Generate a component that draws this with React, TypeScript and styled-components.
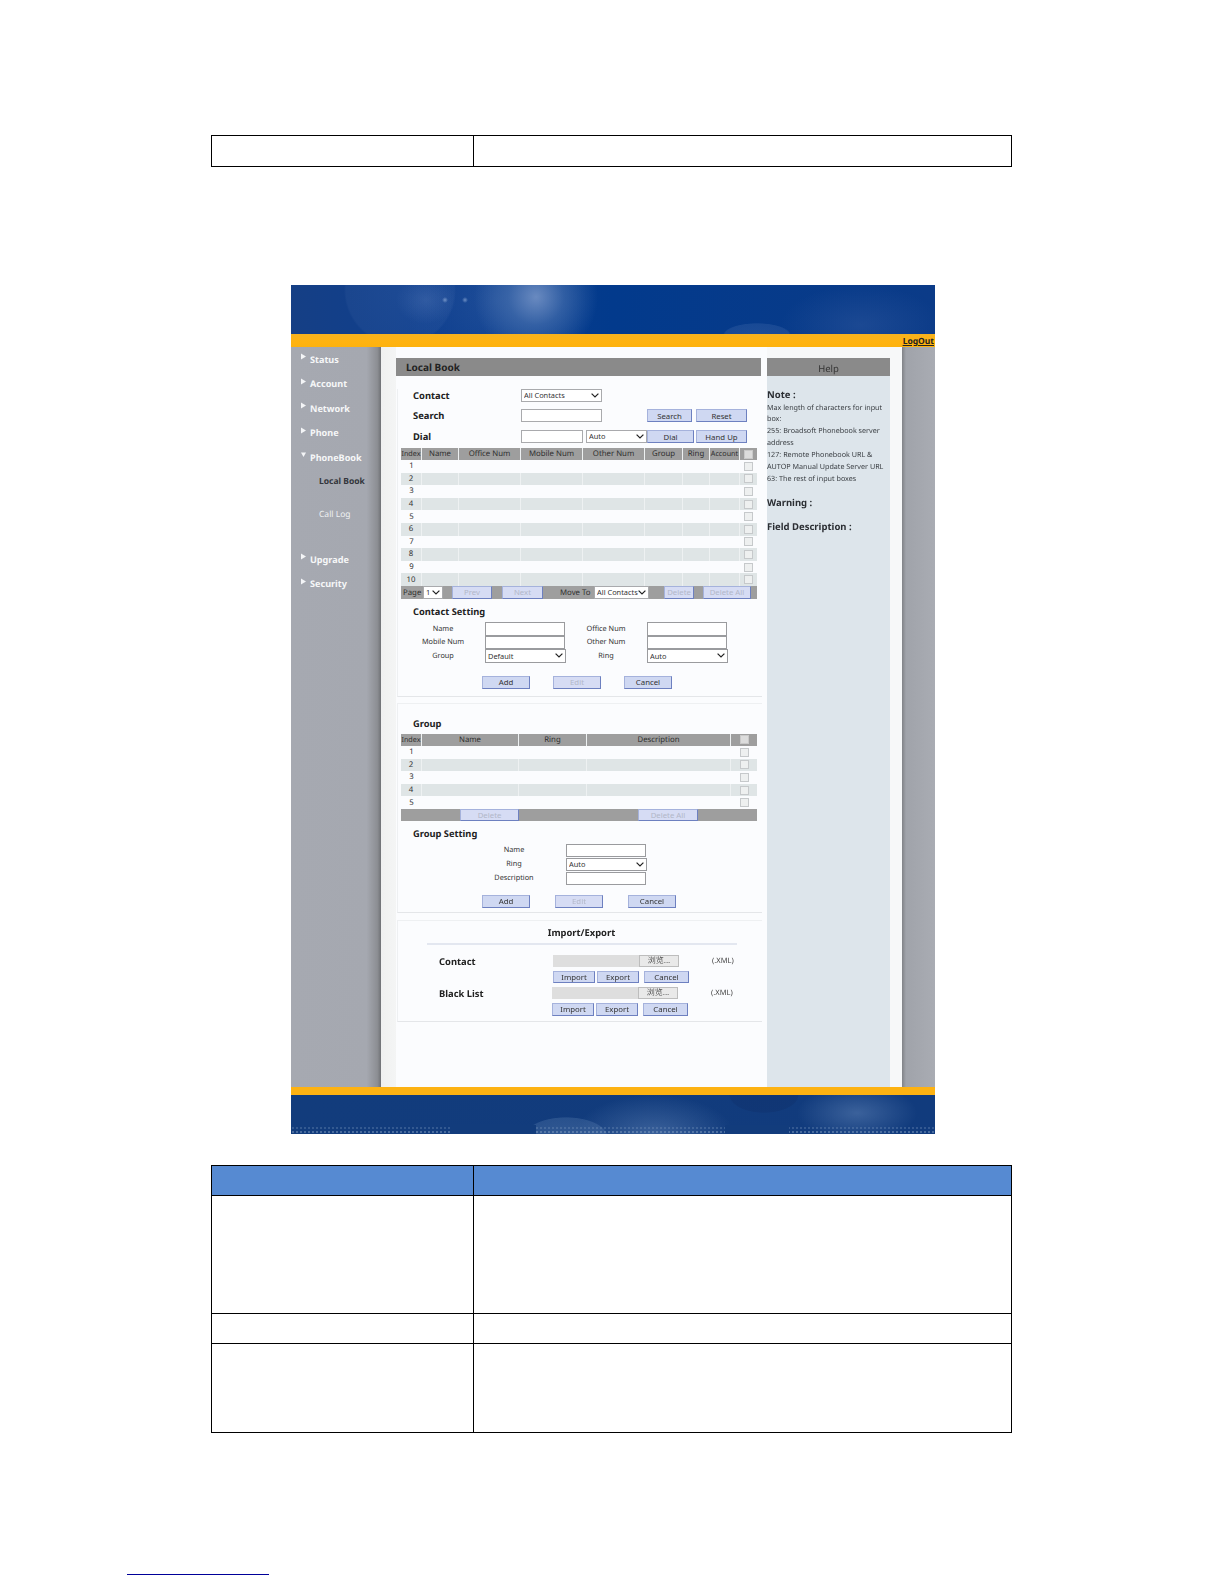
import React from "react";
import styled, { createGlobalStyle, css } from "styled-components";

const Global = createGlobalStyle`
  html, body { margin: 0; padding: 0; background: #fff; }
  body { font-family: "Noto Sans", "Liberation Sans", sans-serif; }
  * { box-sizing: border-box; }
`;

const chevron = css`
  appearance: none;
  background-color: #fff;
  background-image: url("data:image/svg+xml,%3Csvg xmlns='http://www.w3.org/2000/svg' width='8' height='5' viewBox='0 0 8 5'%3E%3Cpath d='M.6.6L4 4l3.4-3.4' fill='none' stroke='%23222' stroke-width='1.2'/%3E%3C/svg%3E");
  background-repeat: no-repeat;
  background-position: right 2px center;
  border-radius: 0;
  font-family: "Noto Sans", "Liberation Sans", sans-serif;
  color: #333;
`;

const Page = styled.div`
  width: 1224px;
  height: 1584px;
  padding-top: 135px;
  overflow: hidden;
`;

const DocTable = styled.div<{ $rows: string; $top: number }>`
  display: grid;
  grid-template-columns: 262px 1fr;
  grid-template-rows: ${(p) => p.$rows};
  width: 801px;
  margin: ${(p) => p.$top}px 0 0 211px;
  border-top: 1px solid #000;
  border-left: 1px solid #000;
`;

const DocCell = styled.div<{ $head?: boolean }>`
  border-right: 1px solid #000;
  border-bottom: 1px solid #000;
  background: ${(p) => (p.$head ? "#568ad2" : "#fff")};
`;

const Frame = styled.div`
  width: 644px;
  height: 849px;
  margin: 118px 0 0 291px;
  display: flex;
  flex-direction: column;
  filter: blur(0.35px);
  color: #333;
  font-size: 8px;
  text-rendering: geometricPrecision;
`;

const Header = styled.div`
  height: 49px;
  flex: none;
  background:
    radial-gradient(circle at 154px 15px, rgba(190, 210, 240, 0.5) 0, rgba(190, 210, 240, 0) 3px),
    radial-gradient(circle at 174px 15px, rgba(190, 210, 240, 0.5) 0, rgba(190, 210, 240, 0) 3px),
    radial-gradient(circle at 245px 12px, rgba(120, 150, 200, 0.85) 0, rgba(80, 120, 180, 0.55) 28px, rgba(30, 75, 150, 0) 62px),
    radial-gradient(circle at 109px 5px, rgba(120, 150, 200, 0.12) 0, rgba(120, 150, 200, 0.08) 54px, rgba(20, 60, 130, 0) 56px),
    radial-gradient(ellipse 30px 24px at 135px 15px, rgba(120, 150, 205, 0.22) 0, rgba(120, 150, 205, 0) 100%),
    radial-gradient(circle at 205px 15px, rgba(110, 140, 195, 0.2) 0, rgba(60, 100, 170, 0.1) 60px, rgba(20, 60, 130, 0) 90px),
    radial-gradient(ellipse 34px 12px at 466px 50px, rgba(90, 125, 185, 0.28) 0, rgba(90, 125, 185, 0.22) 94%, rgba(0, 0, 0, 0) 100%),
    radial-gradient(ellipse 80px 40px at 570px 40px, rgba(70, 105, 170, 0.3) 0, rgba(0, 0, 0, 0) 100%),
    linear-gradient(90deg, #153f85 0, #0f3f8e 20%, #023a8c 50%, #0b3b88 100%);
`;

const OrangeBar = styled.div`
  height: 13px;
  flex: none;
  display: flex;
  justify-content: flex-end;
  align-items: flex-end;
  padding-right: 1px;
  background: linear-gradient(#f6b21f, #ffb310 60%, #fdb20e);
`;

const LogOut = styled.span`
  color: #222;
  font-weight: 700;
  font-size: 8.5px;
  line-height: 11px;
  text-decoration: underline;
`;

const Body = styled.div`
  flex: 1;
  min-height: 0;
  display: grid;
  grid-template-columns: 90px 521px 33px;
`;

const Sidebar = styled.nav`
  display: flex;
  flex-direction: column;
  background: linear-gradient(90deg, #a6a9b1 0, #a5a8b0 84%, #8c8e93 96%, #6f7175 100%);
`;

const NavItem = styled.div`
  height: 24.5px;
  display: flex;
  align-items: center;
  padding-left: 10px;
  gap: 4px;
  color: #f6f7f8;
  font-weight: 700;
  font-size: 9.1px;
`;

const NavIcon = styled.svg`
  width: 5px;
  height: 7px;
  margin-top: -5px;
  flex: none;
`;

const SubItem = styled.div<{ $active?: boolean; $after?: number }>`
  height: 24px;
  display: flex;
  align-items: center;
  padding-left: 28px;
  margin-bottom: ${(p) => p.$after ?? 0}px;
  color: ${(p) => (p.$active ? "#33363c" : "#eef0f2")};
  font-weight: ${(p) => (p.$active ? 700 : 400)};
  font-size: 8.5px;
`;

const Main = styled.main`
  display: grid;
  grid-template-columns: 15px 371px 123px 12px;
  background: #f7f8f9;
`;

const Strip = styled.div`
  background: linear-gradient(90deg, #eff0f0, #f4f5f5);
`;

const Column = styled.div`
  background: #fbfcfe;
  padding-top: 11px;
`;

const HelpPanel = styled.aside`
  background: #dde5eb;
  margin-top: 11px;
`;

const RightRail = styled.div`
  background: linear-gradient(90deg, #808287 0, #a0a3aa 12%, #a9acb3 100%);
`;

const HelpBar = styled.div`
  height: 18px;
  background: #8a8a8a;
  color: #333;
  font-size: 9.5px;
  line-height: 21px;
  text-align: center;
`;

const HelpHeading = styled.div<{ $top: number }>`
  margin-top: ${(p) => p.$top}px;
  font-weight: 700;
  font-size: 9.5px;
  line-height: 13px;
  color: #2b2e33;
`;

const HelpText = styled.div`
  padding-top: 1.5px;
  font-size: 7.2px;
  line-height: 11.9px;
  color: #3c4045;
  white-space: pre;
`;

const TitleBar = styled.div`
  width: 365px;
  height: 18px;
  background: #8a8a8a;
  padding-left: 10px;
  color: #222;
  font-weight: 700;
  font-size: 10px;
  line-height: 19px;
`;

const Section = styled.section<{ $top: number; $pad: number }>`
  width: 365px;
  margin: ${(p) => p.$top}px 0 0 1px;
  padding-bottom: ${(p) => p.$pad}px;
  border-bottom: 1px solid #e4e6e9;
  border-top: ${(p) => (p.$top ? "1px solid #eef0f2" : "none")};
  border-left: 1px solid #eef0f2;
`;

const ToolRow = styled.div<{ $top: number }>`
  display: flex;
  align-items: center;
  height: 13px;
  margin-top: ${(p) => p.$top}px;
  padding-left: 15px;
`;

const RowLabel = styled.span`
  width: 108px;
  flex: none;
  font-weight: 700;
  font-size: 9.4px;
  color: #222;
`;

const TextBox = styled.input<{ $w: string; $ml?: number }>`
  width: ${(p) => p.$w};
  height: 13px;
  margin: 0 0 0 ${(p) => p.$ml ?? 0}px;
  padding: 0 2px;
  background: #fff;
  border: 1px solid #a9aaad;
  flex: none;
`;

const Dropdown = styled.select<{ $w: string; $ml?: number }>`
  ${chevron}
  width: ${(p) => p.$w};
  height: 13px;
  margin: 0 0 0 ${(p) => p.$ml ?? 0}px;
  padding: 0 9px 0 2px;
  border: 1px solid #a9aaad;
  font-size: 7.4px;
  line-height: 11px;
  flex: none;
`;

const Btn = styled.button<{ $w: number; $ml?: number; $off?: boolean; $h?: number }>`
  width: ${(p) => p.$w}px;
  height: ${(p) => p.$h ?? 13}px;
  margin: 0 0 0 ${(p) => p.$ml ?? 0}px;
  padding: 0;
  flex: none;
  background: ${(p) => (p.$off ? "#d6dcf4" : "#cfd8f2")};
  border: 1px solid;
  border-color: #a5b2dc #6d80c0 #6d80c0 #a5b2dc;
  border-radius: 0;
  font-family: "Noto Sans", "Liberation Sans", sans-serif;
  font-size: 7.8px;
  line-height: 10px;
  color: ${(p) => (p.$off ? "#b2b7c8" : "#333")};
`;

const DataTable = styled.div<{ $top: number }>`
  width: 356px;
  margin: ${(p) => p.$top}px 0 0 3px;
`;

const GridRow = styled.div<{ $cols: string; $h: number; $kind: "head" | "band" | "plain" }>`
  display: grid;
  grid-template-columns: ${(p) => p.$cols};
  height: ${(p) => p.$h}px;
  background: ${(p) => (p.$kind === "head" ? "#9e9e9e" : p.$kind === "band" ? "#dfe5e6" : "transparent")};
  color: ${(p) => (p.$kind === "head" ? "#2f2f2f" : "#333")};
`;

const Cell = styled.div<{ $sep: boolean; $tight?: boolean }>`
  display: flex;
  align-items: center;
  justify-content: center;
  overflow: hidden;
  white-space: nowrap;
  font-size: ${(p) => (p.$tight ? "7.2px" : "7.8px")};
  border-right: ${(p) => (p.$sep ? "1px solid #eef1f2" : "none")};
`;

const Check = styled.input<{ $head?: boolean }>`
  appearance: none;
  width: 9px;
  height: 9px;
  margin: 0;
  border: 1px solid ${(p) => (p.$head ? "#c9c9c9" : "#c6c9cb")};
  background: ${(p) => (p.$head ? "#dcdcdc" : "#eef0f0")};
`;

const ActionBar = styled.div<{ $h: number }>`
  height: ${(p) => p.$h}px;
  display: flex;
  align-items: center;
  background: #9e9e9e;
`;

const BarText = styled.span<{ $w: number; $ml: number }>`
  width: ${(p) => p.$w}px;
  margin-left: ${(p) => p.$ml}px;
  padding-top: 2px;
  flex: none;
  font-size: 7.8px;
  color: #2f2f2f;
  background: #a0a0a0;
`;

const SubTitle = styled.div<{ $top: number }>`
  height: 14px;
  margin-top: ${(p) => p.$top}px;
  padding-left: 15px;
  font-weight: 700;
  font-size: 9.3px;
  line-height: 14px;
  color: #222;
`;

const FormGrid = styled.div<{ $cols: string; $rows: string; $left: number; $top: number; $gap?: number }>`
  display: grid;
  grid-template-columns: ${(p) => p.$cols};
  grid-template-rows: ${(p) => p.$rows};
  row-gap: ${(p) => p.$gap ?? 0}px;
  padding-left: ${(p) => p.$left}px;
  margin-top: ${(p) => p.$top}px;
  align-items: stretch;
`;

const FormLabel = styled.label`
  display: flex;
  align-items: center;
  justify-content: center;
  font-size: 7.3px;
  color: #333;
`;

const FieldBox = styled.input`
  width: 80px;
  height: 100%;
  margin: 0;
  padding: 0 2px;
  background: #fff;
  border: 1px solid #9a9b9e;
`;

const FieldSelect = styled.select`
  ${chevron}
  width: 81px;
  height: 100%;
  margin: 0;
  padding: 0 9px 0 2px;
  border: 1px solid #9a9b9e;
  font-size: 7.4px;
`;

const ButtonRow = styled.div<{ $top: number; $left: number; $gap: number }>`
  display: flex;
  margin: ${(p) => p.$top}px 0 0 ${(p) => p.$left}px;
  gap: ${(p) => p.$gap}px;
`;

const CenterTitle = styled.div`
  height: 13px;
  margin-top: 5px;
  text-align: center;
  padding-left: 3px;
  font-weight: 700;
  font-size: 9.4px;
  line-height: 13px;
  color: #222;
`;

const Divider = styled.div`
  width: 310px;
  height: 2px;
  margin: 4px 0 0 29px;
  background: #e3e7f0;
`;

const FileRow = styled.div<{ $top: number }>`
  display: flex;
  align-items: center;
  height: 12px;
  margin-top: ${(p) => p.$top}px;
  padding-left: 41px;
`;

const FileLabel = styled.span<{ $w: number }>`
  width: ${(p) => p.$w}px;
  flex: none;
  font-weight: 700;
  font-size: 9.4px;
  padding-top: 1px;
  color: #222;
`;

const FileTrack = styled.span`
  width: 86px;
  height: 12px;
  flex: none;
  background: #dedede;
`;

const Browse = styled.span`
  width: 40px;
  height: 12px;
  flex: none;
  display: flex;
  align-items: center;
  justify-content: center;
  background: #e9e9e9;
  border: 1px solid #bdbdbd;
  font-family: "Noto Sans CJK SC", "Noto Sans", sans-serif;
  font-size: 8px;
  color: #555;
`;

const XmlTag = styled.span`
  margin-left: 33px;
  font-size: 7.5px;
  color: #444;
`;

const Footer = styled.div`
  height: 47px;
  flex: none;
  border-top: 8px solid #fdb212;
  background:
    linear-gradient(#123c7c, #123c7c) 160px 100% / 85px 9px no-repeat,
    linear-gradient(#123c7c, #123c7c) 434px 100% / 64px 9px no-repeat,
    radial-gradient(circle, rgba(124, 153, 189, 0.65) 0.6px, rgba(0, 0, 0, 0) 1.1px) 0 100% / 4px 4px repeat-x,
    radial-gradient(circle, rgba(124, 153, 189, 0.4) 0.6px, rgba(0, 0, 0, 0) 1.1px) 0 calc(100% - 4px) / 4px 4px repeat-x,
    radial-gradient(ellipse 42px 20px at 275px 42px, rgba(110, 145, 190, 0.35) 0, rgba(110, 145, 190, 0.25) 96%, rgba(0, 0, 0, 0) 100%),
    radial-gradient(ellipse 80px 40px at 363px 40px, rgba(100, 135, 185, 0.5) 0, rgba(0, 0, 0, 0) 100%),
    radial-gradient(ellipse 60px 28px at 566px 18px, rgba(100, 135, 185, 0.5) 0, rgba(0, 0, 0, 0) 100%),
    radial-gradient(ellipse 35px 18px at 473px 0, rgba(15, 50, 110, 0.55) 0, rgba(15, 50, 110, 0.5) 96%, rgba(0, 0, 0, 0) 100%),
    linear-gradient(90deg, #123c7c 0, #113b7d 100%);
`;

const Underline = styled.div`
  width: 142px;
  height: 1px;
  margin: 141px 0 0 127px;
  background: #000099;
`;

const contactCols = "21px 37px 62px 62px 62px 38px 27px 30px 17px";
const contactHead = ["Index", "Name", "Office Num", "Mobile Num", "Other Num", "Group", "Ring", "Account"];
const groupCols = "21px 97px 68px 144px 26px";
const groupHead = ["Index", "Name", "Ring", "Description"];

const Tri = ({ down }: { down?: boolean }) => (
  <NavIcon viewBox="0 0 5 7">
    <path d={down ? "M0 1.5h5L2.5 6z" : "M0 .5l5 3-5 3z"} fill="#f4f5f7" />
  </NavIcon>
);

const Nav = ({ label, down }: { label: string; down?: boolean }) => (
  <NavItem>
    <Tri down={down} />
    {label}
  </NavItem>
);

const Table = ({ cols, head, count, rowH }: { cols: string; head: string[]; count: number; rowH: number }) => (
  <>
    <GridRow $cols={cols} $h={12} $kind="head">
      {head.map((h) => (
        <Cell key={h} $sep $tight={h === "Index" || h === "Account"}>
          {h}
        </Cell>
      ))}
      <Cell $sep={false}>
        <Check type="checkbox" disabled $head />
      </Cell>
    </GridRow>
    {Array.from({ length: count }, (_, i) => (
      <GridRow key={i} $cols={cols} $h={rowH} $kind={i % 2 ? "band" : "plain"}>
        <Cell $sep={!!(i % 2)}>{i + 1}</Cell>
        {head.slice(1).map((h) => (
          <Cell key={h} $sep={!!(i % 2)} />
        ))}
        <Cell $sep={false}>
          <Check type="checkbox" disabled />
        </Cell>
      </GridRow>
    ))}
  </>
);

const FileBlock = ({ label, labelW, top }: { label: string; labelW: number; top: number }) => (
  <FileRow $top={top}>
    <FileLabel $w={labelW}>{label}</FileLabel>
    <FileTrack />
    <Browse>浏览...</Browse>
    <XmlTag>(.XML)</XmlTag>
  </FileRow>
);

export default function App() {
  return (
    <Page>
      <Global />
      <DocTable $rows="31px" $top={0}>
        <DocCell />
        <DocCell />
      </DocTable>

      <Frame>
        <Header />
        <OrangeBar>
          <LogOut>LogOut</LogOut>
        </OrangeBar>
        <Body>
          <Sidebar>
            <Nav label="Status" />
            <Nav label="Account" />
            <Nav label="Network" />
            <Nav label="Phone" />
            <Nav label="PhoneBook" down />
            <SubItem $active $after={9}>
              Local Book
            </SubItem>
            <SubItem $after={20.5}>Call Log</SubItem>
            <Nav label="Upgrade" />
            <Nav label="Security" />
          </Sidebar>
          <Main>
            <Strip />
            <Column>
              <TitleBar>Local Book</TitleBar>
              <Section $top={0} $pad={7}>
                <ToolRow $top={13}>
                  <RowLabel>Contact</RowLabel>
                  <Dropdown $w="81px">
                    <option>All Contacts</option>
                  </Dropdown>
                </ToolRow>
                <ToolRow $top={7}>
                  <RowLabel>Search</RowLabel>
                  <TextBox $w="81px" />
                  <Btn $w={45} $ml={45}>
                    Search
                  </Btn>
                  <Btn $w={51} $ml={4}>
                    Reset
                  </Btn>
                </ToolRow>
                <ToolRow $top={8}>
                  <RowLabel>Dial</RowLabel>
                  <TextBox $w="62px" />
                  <Dropdown $w="61px" $ml={3}>
                    <option>Auto</option>
                  </Dropdown>
                  <Btn $w={47}>Dial</Btn>
                  <Btn $w={51} $ml={2}>
                    Hand Up
                  </Btn>
                </ToolRow>
                <DataTable $top={5}>
                  <Table cols={contactCols} head={contactHead} count={10} rowH={12.6} />
                  <ActionBar $h={13}>
                    <BarText $w={20} $ml={0}>
                      &nbsp;Page
                    </BarText>
                    <Dropdown $w="20px" $ml={2}>
                      <option>1</option>
                    </Dropdown>
                    <Btn $w={40} $ml={9} $off>
                      Prev
                    </Btn>
                    <Btn $w={41} $ml={10} $off>
                      Next
                    </Btn>
                    <BarText $w={34} $ml={17}>
                      Move To
                    </BarText>
                    <Dropdown $w="55px" $ml={0}>
                      <option>All Contacts</option>
                    </Dropdown>
                    <Btn $w={30} $ml={15} $off>
                      Delete
                    </Btn>
                    <Btn $w={48} $ml={9} $off>
                      Delete All
                    </Btn>
                  </ActionBar>
                </DataTable>
                <SubTitle $top={6}>Contact Setting</SubTitle>
                <FormGrid $cols="84px 80px 82px 80px" $rows="14px 13px 14px" $left={3} $top={3}>
                  <FormLabel>Name</FormLabel>
                  <FieldBox />
                  <FormLabel>Office Num</FormLabel>
                  <FieldBox />
                  <FormLabel>Mobile Num</FormLabel>
                  <FieldBox />
                  <FormLabel>Other Num</FormLabel>
                  <FieldBox />
                  <FormLabel>Group</FormLabel>
                  <FieldSelect>
                    <option>Default</option>
                  </FieldSelect>
                  <FormLabel>Ring</FormLabel>
                  <FieldSelect>
                    <option>Auto</option>
                  </FieldSelect>
                </FormGrid>
                <ButtonRow $top={13} $left={84} $gap={23}>
                  <Btn $w={48}>Add</Btn>
                  <Btn $w={48} $off>
                    Edit
                  </Btn>
                  <Btn $w={48}>Cancel</Btn>
                </ButtonRow>
              </Section>

              <Section $top={6} $pad={4}>
                <SubTitle $top={13}>Group</SubTitle>
                <DataTable $top={3}>
                  <Table cols={groupCols} head={groupHead} count={5} rowH={12.6} />
                  <ActionBar $h={12}>
                    <Btn $w={59} $ml={59} $h={12} $off>
                      Delete
                    </Btn>
                    <Btn $w={60} $ml={119} $h={12} $off>
                      Delete All
                    </Btn>
                  </ActionBar>
                </DataTable>
                <SubTitle $top={6}>Group Setting</SubTitle>
                <FormGrid $cols="104px 81px" $rows="13px 13px 13px" $left={64} $top={3} $gap={1}>
                  <FormLabel>Name</FormLabel>
                  <FieldBox />
                  <FormLabel>Ring</FormLabel>
                  <FieldSelect>
                    <option>Auto</option>
                  </FieldSelect>
                  <FormLabel>Description</FormLabel>
                  <FieldBox />
                </FormGrid>
                <ButtonRow $top={10} $left={84} $gap={25}>
                  <Btn $w={48}>Add</Btn>
                  <Btn $w={48} $off>
                    Edit
                  </Btn>
                  <Btn $w={48}>Cancel</Btn>
                </ButtonRow>
              </Section>

              <Section $top={7} $pad={5}>
                <CenterTitle>Import/Export</CenterTitle>
                <Divider />
                <FileBlock label="Contact" labelW={114} top={10} />
                <ButtonRow $top={4} $left={155} $gap={2}>
                  <Btn $w={42} $h={12}>
                    Import
                  </Btn>
                  <Btn $w={42} $h={12}>
                    Export
                  </Btn>
                  <Btn $w={45} $h={12} $ml={3}>
                    Cancel
                  </Btn>
                </ButtonRow>
                <FileBlock label="Black List" labelW={113} top={4} />
                <ButtonRow $top={4} $left={154} $gap={2}>
                  <Btn $w={42}>Import</Btn>
                  <Btn $w={42}>Export</Btn>
                  <Btn $w={45} $ml={3}>
                    Cancel
                  </Btn>
                </ButtonRow>
              </Section>
            </Column>
            <HelpPanel>
              <HelpBar>Help</HelpBar>
              <HelpHeading $top={12}>Note :</HelpHeading>
              <HelpText>
                {"Max length of characters for input\nbox:\n255: Broadsoft Phonebook server\naddress\n127: Remote Phonebook URL &\nAUTOP Manual Update Server URL\n63: The rest of input boxes"}
              </HelpText>
              <HelpHeading $top={10.5}>Warning :</HelpHeading>
              <HelpHeading $top={11}>Field Description :</HelpHeading>
            </HelpPanel>
            <div />
          </Main>
          <RightRail />
        </Body>
        <Footer />
      </Frame>

      <DocTable $rows="30px 118px 30px 89px" $top={31}>
        <DocCell $head />
        <DocCell $head />
        <DocCell />
        <DocCell />
        <DocCell />
        <DocCell />
        <DocCell />
        <DocCell />
      </DocTable>
      <Underline />
    </Page>
  );
}
